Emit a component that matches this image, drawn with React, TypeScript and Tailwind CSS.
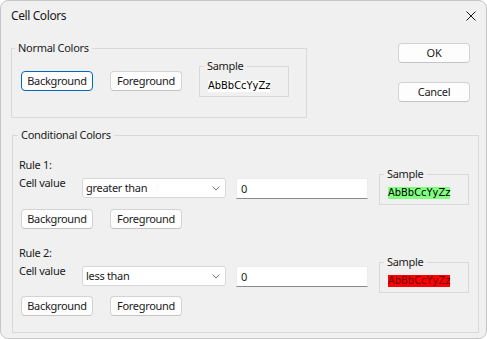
import React from "react";

const UI = "font-['Noto_Sans','Open_Sans',sans-serif] text-[11px] leading-[16px] tracking-[-0.3px] text-[#1b1b1b]";
const SAMPLE_FONT = "font-['DejaVu_Sans','Liberation_Sans',sans-serif] font-stretch-condensed text-[11px] leading-[12px] tracking-normal";

function Btn({ label, focused = false }: { label: string; focused?: boolean }) {
  return (
    <button
      type="button"
      className={
        focused
          ? "flex h-[20px] w-[72px] items-center justify-center rounded-[4px] border border-[#0067c0] bg-[#fdfdfd] text-[#1b1b1b]"
          : "flex h-[20px] w-[72px] items-center justify-center rounded-[4px] border border-[#d3d3d3] border-b-[#c4c4c4] bg-[#fdfdfd] text-[#1b1b1b]"
      }
    >
      {label}
    </button>
  );
}

function Sample({ swatch, pad, extra }: { swatch: string; pad: string; extra: string }) {
  return (
    <fieldset className={`w-[90px] shrink-0 border border-[#d9d9d9] pl-[8px] ${pad} ${extra}`}>
      <legend className="-ml-[4px] px-[3px] leading-[16px]">Sample</legend>
      <span className={`${SAMPLE_FONT} ${swatch} block w-fit`}>AbBbCcYyZz</span>
    </fieldset>
  );
}

function Chevron() {
  return (
    <svg width="8" height="5" viewBox="0 0 8 5" className="text-[#7a7a7a]">
      <polyline points="0.5,0.5 4,4 7.5,0.5" fill="none" stroke="currentColor" strokeWidth="1" />
    </svg>
  );
}

function Rule({
  n,
  op,
  swatch,
  btnGap,
}: {
  n: number;
  op: string;
  swatch: string;
  btnGap: string;
}) {
  return (
    <div>
      <div className="flex">
        <div className="flex w-[349px] flex-col">
          <div className="leading-[16px]">Rule {n}:</div>
          <div className="flex items-start">
            <div className="mt-[2px] w-[63px]">Cell value</div>
            <div className="mt-[5px] flex h-[20px] w-[144px] items-center justify-between rounded-[3px] border border-[#d9d9d9] bg-white pl-[3px] pr-[5px]">
              <span>{op}</span>
              <Chevron />
            </div>
            <div className="ml-[10px] mt-[5px] flex h-[21px] w-[132px] items-center border border-[#ececec] border-b-[#8a8a8a] bg-white pl-[4px]">
              0
            </div>
          </div>
        </div>
        <Sample swatch={swatch} pad="pt-[5px] pb-[5px]" extra="ml-[11px] mt-[9px]" />
      </div>
      <div className={`ml-[2px] flex gap-[17px] ${btnGap}`}>
        <Btn label="Background" />
        <Btn label="Foreground" />
      </div>
    </div>
  );
}

export default function App() {
  return (
    <div className="h-[339px] w-[487px] bg-white">
      <div className={`flex h-full w-full flex-col overflow-hidden rounded-[8px] border border-[#c6c6c6] bg-[#f0f0f0] ${UI}`}>
        <div className="flex h-[30px] shrink-0 items-center justify-between pl-[10px] pr-[10px]">
          <span className="text-[12px] tracking-[-0.4px]">Cell Colors</span>
          <svg width="10" height="10" viewBox="0 0 10 10" className="text-[#1b1b1b]">
            <path d="M0.5 0.5 L9.5 9.5 M9.5 0.5 L0.5 9.5" stroke="currentColor" strokeWidth="1" fill="none" />
          </svg>
        </div>

        <div className="flex">
          <fieldset className="ml-[10px] mt-[9px] w-[296px] border border-[#d9d9d9] pb-[20px] pl-[9px] pt-[2px]">
            <legend className="-ml-[6px] px-[3px] leading-[16px]">Normal Colors</legend>
            <div className="flex items-start">
              <div className="mt-[13px] flex gap-[17px]">
                <Btn label="Background" focused />
                <Btn label="Foreground" />
              </div>
              <Sample swatch="bg-white text-black" pad="pt-[6px] pb-[4px]" extra="ml-[17px]" />
            </div>
          </fieldset>
          <div className="ml-auto mr-[16px] mt-[12px] flex flex-col gap-[19px]">
            <Btn label="OK" />
            <Btn label="Cancel" />
          </div>
        </div>

        <fieldset className="ml-[11px] mt-[9px] w-[467px] border border-[#d9d9d9] pb-[16px] pl-[6px] pt-[14px]">
          <legend className="-ml-[1px] px-[3px] leading-[16px]">Conditional Colors</legend>
          <Rule n={1} op="greater than" swatch="bg-[#80ff80] text-black" btnGap="mt-[4px]" />
          <div className="mt-[16px]">
            <Rule n={2} op="less than" swatch="bg-[#ff0000] text-[#6e0000]" btnGap="mt-[3px]" />
          </div>
        </fieldset>
      </div>
    </div>
  );
}
